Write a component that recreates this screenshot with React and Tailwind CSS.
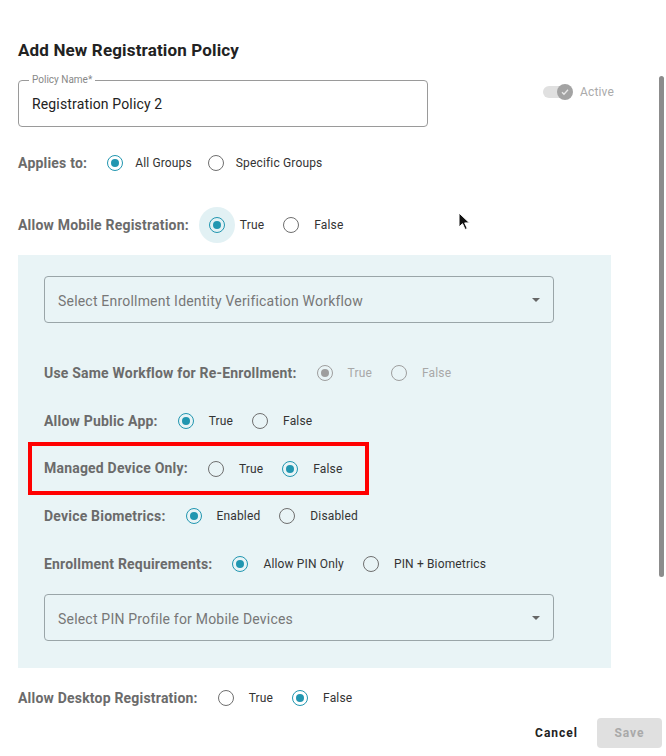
import React from "react";

function Radio({ checked, disabled, halo }) {
  const ring = disabled
    ? "border-[#9e9e9e]"
    : checked
    ? "border-[#2196b0]"
    : "border-[#6f6f6f]";
  const dot = disabled ? "bg-[#9e9e9e]" : "bg-[#2196b0]";
  return (
    <span className="relative flex h-4 w-4 items-center justify-center">
      {halo ? (
        <span className="absolute -left-[10px] -top-[10px] h-9 w-9 rounded-full bg-[#e2f1f4]" />
      ) : null}
      <span
        className={`relative flex h-4 w-4 items-center justify-center rounded-full border-[1.5px] ${ring}`}
      >
        {checked ? <span className={`h-2 w-2 rounded-full ${dot}`} /> : null}
      </span>
    </span>
  );
}

function Option({ label, checked, disabled, halo, inner }) {
  return (
    <div className={`flex items-center ${inner}`}>
      <Radio checked={checked} disabled={disabled} halo={halo} />
      <span
        className={`text-[12px] tracking-[0.15px] ${disabled ? "text-[#a8a8a8]" : "text-[#333]"}`}
      >
        {label}
      </span>
    </div>
  );
}

function RadioRow({
  label,
  options,
  value,
  disabled,
  halo,
  height = "h-12",
  gap = "gap-[19px]",
  inner = "gap-[15px]",
  className = "",
}) {
  return (
    <div className={`flex items-center ${height} ${className}`}>
      <span className="mr-5 text-[14px] font-bold tracking-[0.2px] text-[#6b6b6b]">{label}</span>
      <div className={`flex items-center ${gap}`}>
        {options.map((opt) => (
          <Option
            key={opt}
            label={opt}
            checked={opt === value}
            disabled={disabled}
            halo={halo && opt === value}
            inner={inner}
          />
        ))}
      </div>
    </div>
  );
}

function SelectBox({ placeholder, className = "" }) {
  return (
    <div
      className={`flex h-[47px] w-[510px] items-center justify-between rounded-[4px] border border-[#9aa5a8] pl-[13px] pr-[13px] ${className}`}
    >
      <span className="pt-[3px] text-[14px] tracking-[0.2px] text-[#777]">{placeholder}</span>
      <svg width="8" height="4" viewBox="0 0 8 4">
        <path d="M0 0h8L4 4z" fill="#666" />
      </svg>
    </div>
  );
}

export default function App() {
  return (
    <div
      className="relative h-[756px] w-[666px] overflow-hidden bg-white pl-[18px]"
      style={{ fontFamily: "Roboto, 'Liberation Sans', sans-serif" }}
    >
      <h1 className="pt-[38px] text-[17px] font-bold leading-6 tracking-[0.15px] text-[#222]">
        Add New Registration Policy
      </h1>

      <div className="mt-[18px] flex items-start">
        <div className="relative flex h-[47px] w-[410px] items-center rounded-[4px] border border-[#9a9a9a] pl-[13px]">
          <span className="absolute -top-[7px] left-[10px] bg-white px-[3px] text-[10px] leading-3 text-[#888]">
            Policy Name*
          </span>
          <span className="pt-[2px] text-[14px] tracking-[0.15px] text-[#222]">Registration Policy 2</span>
        </div>
        <div className="ml-[115px] mt-[3px] flex items-center gap-[7px]">
          <div className="relative flex h-4 w-[30px] items-center">
            <span className="h-3 w-[26px] rounded-full bg-[#e0e0e0]" />
            <span className="absolute right-0 top-0 flex h-4 w-4 items-center justify-center rounded-full bg-[#a3a3a3]">
              <svg width="10" height="10" viewBox="0 0 10 10">
                <path d="M2 5.2l2 2 4-4.4" stroke="#e8e8e8" strokeWidth="1.3" fill="none" />
              </svg>
            </span>
          </div>
          <span className="text-[12px] tracking-[0.15px] text-[#aaa]">Active</span>
        </div>
      </div>

      <RadioRow
        label="Applies to:"
        options={["All Groups", "Specific Groups"]}
        value="All Groups"
        height="h-8"
        gap="gap-4"
        inner="gap-3"
        className="mt-[20px]"
      />

      <RadioRow
        label="Allow Mobile Registration:"
        options={["True", "False"]}
        value="True"
        halo
        height="h-9"
        className="mt-[28px]"
      />

      <div className="mt-[12px] w-[593px] bg-[#e9f4f6] pb-[27px] pl-[26px] pt-[21px]">
        <SelectBox placeholder="Select Enrollment Identity Verification Workflow" />

        <RadioRow
          label="Use Same Workflow for Re-Enrollment:"
          options={["True", "False"]}
          value="True"
          disabled
          className="mt-[26px]"
        />
        <RadioRow label="Allow Public App:" options={["True", "False"]} value="True" />
        <div className="relative">
          <span className="absolute -left-[16px] -top-[3px] h-[53px] w-[341px] border-4 border-[#ff0000]" />
          <RadioRow label="Managed Device Only:" options={["True", "False"]} value="False" height="h-[47px]" />
        </div>
        <RadioRow
          label="Device Biometrics:"
          options={["Enabled", "Disabled"]}
          value="Enabled"
        />
        <RadioRow
          label="Enrollment Requirements:"
          options={["Allow PIN Only", "PIN + Biometrics"]}
          value="Allow PIN Only"
        />

        <SelectBox placeholder="Select PIN Profile for Mobile Devices" className="mt-[6px]" />
      </div>

      <RadioRow
        label="Allow Desktop Registration:"
        options={["True", "False"]}
        value="False"
        height="h-9"
        className="mt-[12px]"
      />

      <div className="mt-[2px] flex items-center justify-end gap-[11px] pr-[4px]">
        <button type="button" className="px-2 text-[12px] font-bold tracking-[1px] text-[#222]">
          Cancel
        </button>
        <button
          type="button"
          className="h-[30px] w-[65px] rounded-[4px] bg-[#e0e0e0] text-[12px] font-bold tracking-[1px] text-[#a9a9a9]"
        >
          Save
        </button>
      </div>

      <div className="absolute right-[2px] top-[76px] h-[501px] w-[5px] rounded-full bg-[#8c8c8c]" />

      <svg className="absolute left-[458px] top-[212px]" width="13" height="19" viewBox="0 0 13 19">
        <path d="M1 1v14l3.5-3.3 2.6 5.8 2.2-1-2.6-5.6H11.5z" fill="#111" stroke="#fff" strokeWidth="1" />
      </svg>
    </div>
  );
}
